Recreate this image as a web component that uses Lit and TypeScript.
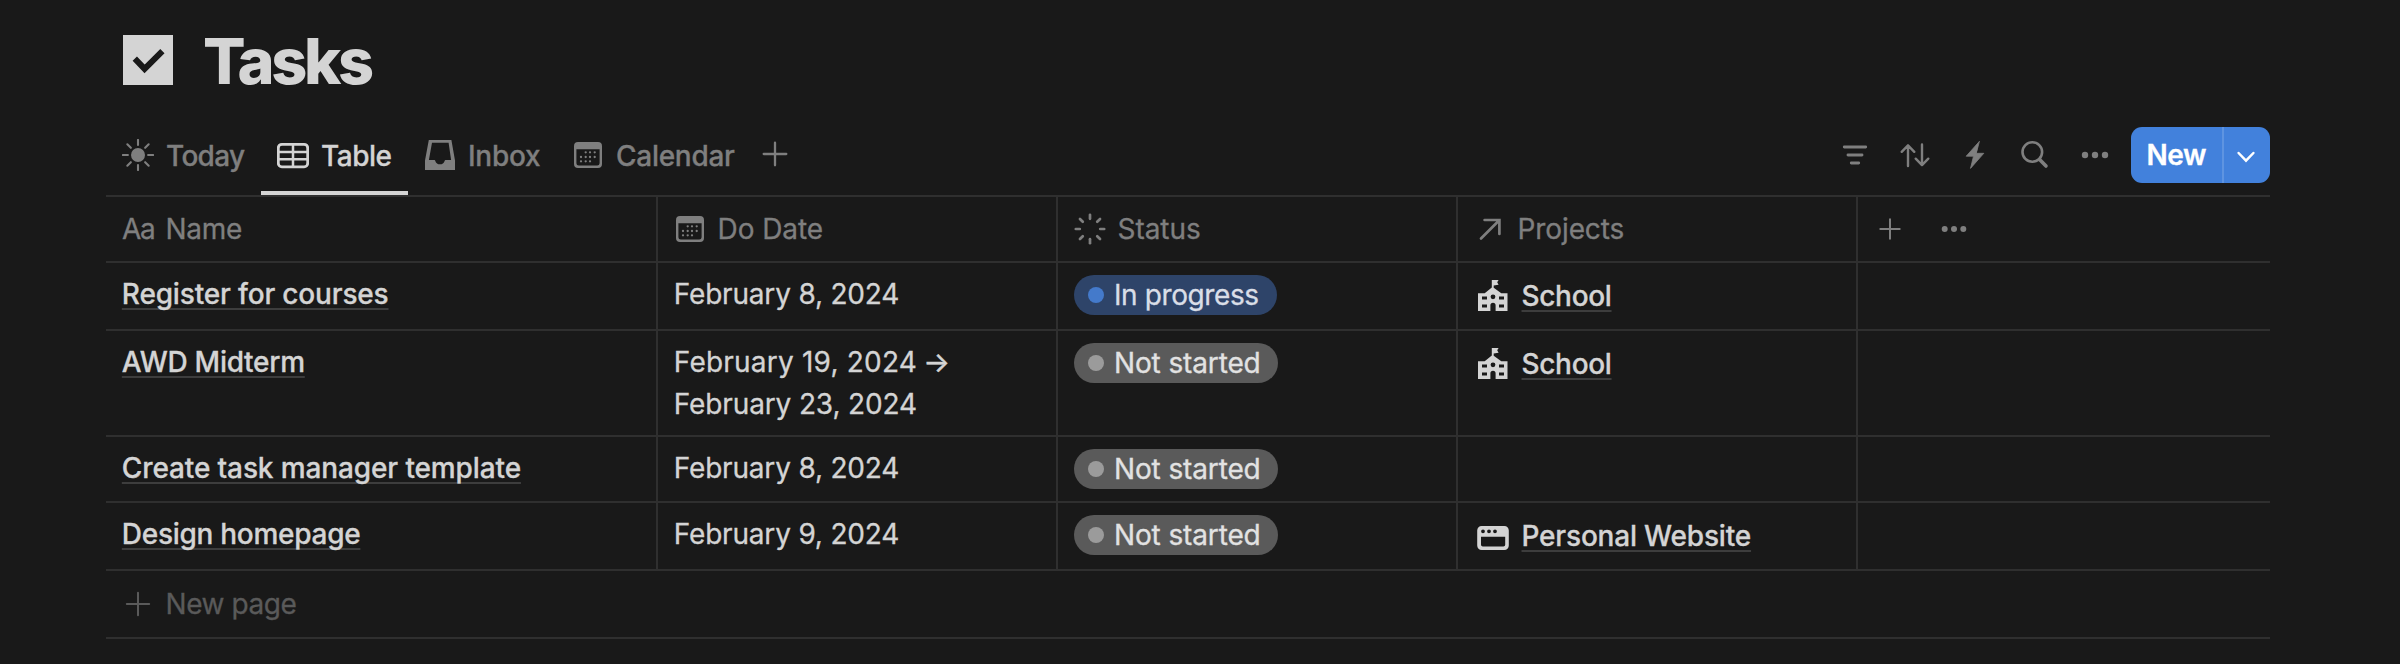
import { LitElement, html, svg, css, nothing, TemplateResult } from "lit";
import { customElement } from "lit/decorators.js";
import { classMap } from "lit/directives/class-map.js";
import { styleMap } from "lit/directives/style-map.js";

/** A text run and the letter-spacing (px) it is set with. */
type Run = { text: string; track: number };
const run = (text: string, track: number): Run => ({ text, track });

const icon = (body: TemplateResult, size = 32) => html`
  <svg class="icon" width=${size} height=${size} viewBox="0 0 ${size} ${size}" fill="none" stroke-linecap="round">
    ${body}
  </svg>
`;

const angles = [0, 45, 90, 135, 180, 225, 270, 315];

const calendarBody = svg`
  <path fill="currentColor" fill-rule="evenodd"
    d="M6 3h20a4 4 0 0 1 4 4v18a4 4 0 0 1-4 4H6a4 4 0 0 1-4-4V7a4 4 0 0 1 4-4zM4.4 10.2v14a2.4 2.4 0 0 0 2.4 2.4h18.4a2.4 2.4 0 0 0 2.4-2.4v-14z"/>
  ${[
    [13.7, 13.3], [18, 13.3], [22.7, 13.3],
    [9, 18], [13.7, 18], [18, 18], [22.7, 18],
    [9, 22.3], [13.7, 22.3], [18, 22.3],
  ].map(([x, y]) => svg`<circle cx=${x} cy=${y} r="1.15" fill="currentColor"/>`)}
`;

const dots = (gap: number, r: number) => svg`
  ${[-gap, 0, gap].map((d) => svg`<circle cx=${16 + d} cy="16" r=${r} fill="currentColor"/>`)}
`;

const plus = (half: number, width = 2) => svg`
  <path d="M16 ${16 - half}V${16 + half}M${16 - half} 16H${16 + half}" stroke="currentColor" stroke-width=${width}/>
`;

const icons = {
  sun: svg`
    <circle cx="16" cy="16" r="7" fill="currentColor"/>
    ${angles.map((a) => svg`<path d="M16 .9v5" stroke="currentColor" stroke-width="2.1" transform="rotate(${a} 16 16)"/>`)}
  `,
  table: svg`
    <rect x="1.3" y="5.3" width="29.4" height="22.6" rx="3.6" stroke="currentColor" stroke-width="2.8"/>
    <path d="M16 6v21M2 13h28M2 20.2h28" stroke="currentColor" stroke-width="2.5"/>
  `,
  inbox: svg`
    <path fill="currentColor" fill-rule="evenodd"
      d="M4.8 1h22.6L31 21.5V31H1V21.5zM8 3.8L4.9 21h5.6c.5 0 .6.3.8.9a4.9 4.9 0 0 0 9.3 0c.2-.6.4-.9.9-.9h5.6L24.6 3.8z"/>
  `,
  calendar: calendarBody,
  status: svg`
    ${angles.map((a) => svg`<path d="M16 1.8v4" stroke="currentColor" stroke-width="2.7" transform="rotate(${a} 16 16)"/>`)}
  `,
  relation: svg`
    <path d="M7 25.5L25 7.5M10.6 7H25.4V21" stroke="currentColor" stroke-width="2.7" stroke-linejoin="miter"/>
  `,
  filter: svg`<path d="M5.3 8h21.4M9 16h14M12.3 24h7.4" stroke="currentColor" stroke-width="2.9"/>`,
  sort: svg`
    <path d="M9 6.5V27M2.7 12.8L9 6.3l6.3 6.5M23 5.5V26M16.7 19.7L23 26.2l6.3-6.5" stroke="currentColor" stroke-width="2.4" stroke-linejoin="round"/>
  `,
  bolt: svg`
    <path d="M20.2 2.6L7.2 17.2h7.3l-3 12.2L24.8 14.3h-7.2z" fill="currentColor" stroke="currentColor" stroke-width=".8" stroke-linejoin="round"/>
  `,
  search: svg`
    <circle cx="13.3" cy="13" r="9.8" stroke="currentColor" stroke-width="2.6"/>
    <path d="M20.6 20.4l6.4 6.6" stroke="currentColor" stroke-width="3.6"/>
  `,
  more: dots(10, 3.2),
  school: svg`
    <path fill="currentColor" fill-rule="evenodd"
      d="M14.8 0h6.8l-1.4 2.3 1.4 2.4-4.9.8v2.3l7.6 5.5h6.2V31H18.6v-5.6a2.6 2.6 0 0 0-5.2 0V31H1V13.3h6.7l7.1-5.7zM5 16.6v3h5v-3zM5 24.4v3h5v-3zM22 16.6v3h5v-3zM22 24.4v3h5v-3zM16 14.4a2.4 2.4 0 1 0 0 4.8a2.4 2.4 0 0 0 0-4.8z"/>
  `,
  browser: svg`
    <path fill="currentColor" fill-rule="evenodd"
      d="M4.6 6h22.8a4.4 4.4 0 0 1 4.4 4.4v15.2a4.4 4.4 0 0 1-4.4 4.4H4.6a4.4 4.4 0 0 1-4.4-4.4V10.4A4.4 4.4 0 0 1 4.6 6zM4 16.8v8a1.8 1.8 0 0 0 1.8 1.8h20.6a1.8 1.8 0 0 0 1.8-1.8v-8zM6 9.4a1.9 1.9 0 1 0 0 3.8a1.9 1.9 0 0 0 0-3.8zM12 9.4a1.9 1.9 0 1 0 0 3.8a1.9 1.9 0 0 0 0-3.8zM18 9.4a1.9 1.9 0 1 0 0 3.8a1.9 1.9 0 0 0 0-3.8z"/>
  `,
};
type IconName = keyof typeof icons;

const tabs: { icon: IconName; label: Run; width: number; active?: boolean }[] = [
  { icon: "sun", label: run("Today", -0.69), width: 155 },
  { icon: "table", label: run("Table", -0.5), width: 147, active: true },
  { icon: "inbox", label: run("Inbox", -0.27), width: 148 },
  { icon: "calendar", label: run("Calendar", -0.28), width: 196 },
];

const tools: IconName[] = ["filter", "sort", "bolt", "search", "more"];

const columns: { icon: IconName; label: Run }[] = [
  { icon: "calendar", label: run("Do Date", -0.08) },
  { icon: "status", label: run("Status", -0.04) },
  { icon: "relation", label: run("Projects", -0.1) },
];

const inProgress = { kind: "progress", label: run("In progress", -0.4) };
const notStarted = { kind: "idle", label: run("Not started", -0.13) };
const school = { icon: "school" as IconName, label: run("School", -0.32) };
const website = { icon: "browser" as IconName, label: run("Personal Website", -0.19) };

interface Task {
  name: Run;
  start: Run;
  end?: Run;
  status: { kind: string; label: Run };
  project?: { icon: IconName; label: Run };
}

const tasks: Task[] = [
  { name: run("Register for courses", -0.17), start: run("February 8, 2024", -0.19), status: inProgress, project: school },
  { name: run("AWD Midterm", -0.27), start: run("February 19, 2024", 0.21), end: run("February 23, 2024", -0.13), status: notStarted, project: school },
  { name: run("Create task manager template", -0.12), start: run("February 8, 2024", -0.19), status: notStarted },
  { name: run("Design homepage", -0.28), start: run("February 9, 2024", -0.19), status: notStarted, project: website },
];

@customElement("app-root")
export class AppRoot extends LitElement {
  static styles = css`
    :host {
      display: block;
      box-sizing: border-box;
      height: 664px;
      padding: 0 130px 0 106px;
      background: #191919;
      color: #d4d4d4;
      font: 400 28px/42px Inter, "Liberation Sans", sans-serif;
      -webkit-text-stroke: 0.3px;
      overflow: hidden;
      --line: #2f2f2f;
      --muted: #7f7f7f;
    }
    .icon { display: block; flex: none; }
    .run { white-space: nowrap; }

    .title { display: flex; align-items: center; gap: 30px; height: 110px; padding: 5px 0 0 17px; }
    .title h1 { margin: 0; padding-top: 2px; font-size: 63px; line-height: 76px; font-weight: 800; -webkit-text-stroke: 0; }

    .toolbar { display: flex; align-items: center; height: 80px; }
    .tab {
      display: flex; align-items: center; gap: 12px; box-sizing: border-box;
      height: 80px; padding: 0 0 0 16px; color: var(--muted); font-weight: 500;
    }
    .tab .run { padding-top: 2px; }
    .tab.active { color: #d4d4d4; box-shadow: inset 0 -4px #d4d4d4; }
    .add-view { display: flex; justify-content: center; width: 46px; padding-bottom: 2px; color: var(--muted); }
    .tools { display: flex; margin-left: auto; color: var(--muted); }
    .tool { display: flex; justify-content: center; width: 60px; }
    .new { display: flex; height: 56px; margin-left: 6px; border-radius: 11px; overflow: hidden; background: #4281dc; color: #fff; }
    .new-label { display: flex; align-items: center; box-sizing: border-box; width: 93px; padding-left: 15.5px; border-right: 2px solid #5e94e1; font-weight: 600; }
    .new-menu { display: flex; align-items: center; justify-content: center; width: 44px; padding-right: 2px; }

    .table { border-top: 2px solid var(--line); }
    .row { display: grid; grid-template-columns: 552px 400px 400px 400px 1fr; border-bottom: 2px solid var(--line); }
    .cell { box-sizing: border-box; border-right: 2px solid var(--line); padding: 10px 0 10px 15.8px; }
    .cell:last-child { border-right: 0; }

    .head { height: 64px; color: var(--muted); }
    .head .cell { display: flex; align-items: center; gap: 11.5px; padding: 0 0 0 16px; }
    .letters { width: 32px; }
    .head .actions { gap: 32px; }

    .link {
      font-weight: 500; text-decoration: underline; text-decoration-color: #3d3d3d;
      text-decoration-thickness: 2px; text-underline-offset: 4px; text-decoration-skip-ink: none;
    }
    .date { display: block; }
    .arrow { margin-left: 6px; -webkit-text-stroke: 0.5px; }
    .status { padding: 12px 0 12px 16px; }
    .pill { display: flex; align-items: center; box-sizing: border-box; height: 40px; padding-left: 14px; border-radius: 20px; }
    .dot { width: 16px; height: 16px; margin-right: 10px; border-radius: 50%; }
    .pill.progress { width: 203px; background: #2e4469; color: #d9dee7; }
    .pill.progress .dot { background: #447acb; }
    .pill.idle { width: 204px; background: #5a5a5a; color: #e2e2e2; }
    .pill.idle .dot { background: #9b9b9b; }
    .project { display: flex; gap: 12.5px; align-items: center; padding: 12px 0 12px 19px; }
    .project-cell { padding: 0; }
    .new-page { display: flex; align-items: center; gap: 11.5px; height: 66px; padding-left: 16px; border-bottom: 2px solid var(--line); color: #5a5a5a; }
  `;

  private run(r: Run, extra = "") {
    return html`<span class="run ${extra}" style=${styleMap({ letterSpacing: `${r.track}px` })}>${r.text}</span>`;
  }

  private renderTask(task: Task) {
    return html`
      <div class="row">
        <div class="cell">${this.run(task.name, "link")}</div>
        <div class="cell">
          <div class="date">${this.run(task.start)}${task.end ? html`<span class="arrow">→</span>` : nothing}</div>
          ${task.end ? html`<div class="date">${this.run(task.end)}</div>` : nothing}
        </div>
        <div class="cell status">
          <div class="pill ${task.status.kind}"><span class="dot"></span>${this.run(task.status.label)}</div>
        </div>
        <div class="cell project-cell">
          ${task.project
            ? html`<div class="project">${icon(icons[task.project.icon])}${this.run(task.project.label, "link")}</div>`
            : nothing}
        </div>
        <div class="cell"></div>
      </div>
    `;
  }

  render() {
    return html`
      <header class="title">
        ${icon(svg`
          <rect width="50" height="50" fill="#d4d4d4"/>
          <path d="M11.8 23.6L21.6 33.9L39.4 16.2" stroke="#191919" stroke-width="6" stroke-linecap="butt"/>
        `, 50)}
        <h1>${this.run(run("Tasks", -3.4))}</h1>
      </header>

      <nav class="toolbar">
        ${tabs.map((t) => html`
          <div class=${classMap({ tab: true, active: !!t.active })} style=${styleMap({ width: `${t.width}px` })}>
            ${icon(icons[t.icon])}${this.run(t.label)}
          </div>
        `)}
        <div class="add-view">${icon(plus(11.3, 2.3))}</div>
        <div class="tools">${tools.map((t) => html`<div class="tool">${icon(icons[t])}</div>`)}</div>
        <div class="new">
          <div class="new-label">${this.run(run("New", -0.5))}</div>
          <div class="new-menu">
            ${icon(svg`<path d="M8.6 14l7.4 7.6L23.4 14" stroke="currentColor" stroke-width="2.5"/>`)}
          </div>
        </div>
      </nav>

      <section class="table">
        <div class="row head">
          <div class="cell"><span class="letters">${this.run(run("Aa", -1.3))}</span>${this.run(run("Name", -0.28))}</div>
          ${columns.map((c) => html`<div class="cell">${icon(icons[c.icon])}${this.run(c.label)}</div>`)}
          <div class="cell actions">${icon(plus(9.7))}${icon(dots(9.3, 3))}</div>
        </div>
        ${tasks.map((t) => this.renderTask(t))}
        <div class="new-page">${icon(plus(11.2))}${this.run(run("New page", -0.43))}</div>
      </section>
    `;
  }
}
